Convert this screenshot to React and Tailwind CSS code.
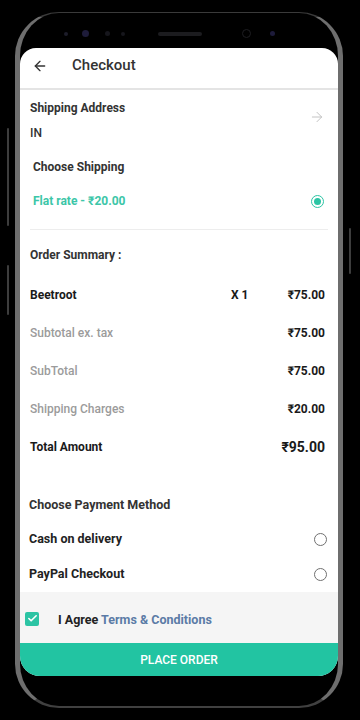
import React from "react";
import { ArrowLeft, ArrowRight, Check } from "lucide-react";

function Row({ label, qty, amount, grey, big }) {
  return (
    <div className="flex h-[38px] items-center">
      <span
        className={
          "flex-1 text-[12px] leading-[16px] " +
          (grey ? "font-medium text-[#9b9b9b]" : "font-bold text-[#1a1a1a]")
        }
      >
        {label}
      </span>
      <span className="w-[35px] text-[12px] font-bold text-[#1a1a1a]">{qty}</span>
      <span
        className={
          "w-[62px] pr-[3px] text-right font-bold text-[#1a1a1a] " +
          (big ? "text-[14px]" : "text-[12px]")
        }
      >
        {amount}
      </span>
    </div>
  );
}

function Radio({ checked }) {
  return checked ? (
    <span className="flex h-[13px] w-[13px] items-center justify-center rounded-full border-[1.5px] border-[#2cc4a4]">
      <span className="h-[7px] w-[7px] rounded-full bg-[#2cc4a4]" />
    </span>
  ) : (
    <span className="h-[13px] w-[13px] rounded-full border-[1.5px] border-[#707070]" />
  );
}

export default function App() {
  return (
    <div className="relative h-[720px] w-[360px] overflow-hidden bg-black font-[Roboto]">
      {/* side buttons */}
      <div className="absolute left-[7px] top-[128px] h-[98px] w-[2px] rounded bg-[#3d3d3d]" />
      <div className="absolute left-[7px] top-[265px] h-[50px] w-[2px] rounded bg-[#3d3d3d]" />
      <div className="absolute left-[349px] top-[228px] h-[46px] w-[2px] rounded bg-[#3d3d3d]" />

      {/* phone body */}
      <div className="ml-[15px] mt-[12px] flex h-[696px] w-[328px] flex-col rounded-[44px] border-x-[5px] border-b-[2px] border-t-[1px] border-x-[#6e6e6e] border-b-[#404040] border-t-[#3a3a3a] bg-black">
        {/* top bezel */}
        <div className="flex h-[35px] items-center pt-[6px]">
          <span className="ml-[44px] h-[4px] w-[4px] rounded-full bg-[#1d1d2a]" />
          <span className="ml-[14px] h-[7px] w-[7px] rounded-full bg-[#1e1c3a]" />
          <span className="ml-[16px] h-[5px] w-[5px] rounded-full bg-[#16161c]" />
          <span className="ml-[11px] h-[4px] w-[4px] rounded-full bg-[#16161c]" />
          <span className="ml-[33px] h-[4px] w-[44px] rounded-full bg-[#1c1c1f]" />
          <span className="ml-[40px] h-[9px] w-[9px] rounded-full border-[1.5px] border-[#1e1e22]" />
          <span className="ml-[19px] h-[5px] w-[5px] rounded-full bg-[#1d1b3a]" />
        </div>

        {/* screen */}
        <div className="flex h-[628px] w-[318px] flex-col overflow-hidden rounded-b-[20px] rounded-t-[16px] bg-white">
          {/* header */}
          <div className="flex h-[42px] shrink-0 items-center border-b-2 border-[#e4e4e4] pb-[5px] pl-[12px]">
            <ArrowLeft size={16} strokeWidth={2} className="text-[#333]" />
            <span className="ml-[24px] text-[15px] font-medium text-[#333]">Checkout</span>
          </div>

          <div className="flex flex-col px-[10px]">
            <div className="mt-[10px] flex items-start justify-between">
              <div className="flex flex-col">
                <span className="text-[12px] font-bold leading-[16px] text-[#333]">Shipping Address</span>
                <span className="mt-[9px] text-[12px] font-medium leading-[16px] text-[#333]">IN</span>
              </div>
              <ArrowRight size={16} strokeWidth={1.5} className="mr-[3px] mt-[9px] text-[#c4c4c4]" />
            </div>

            <span className="mt-[18px] pl-[3px] text-[12px] font-bold leading-[16px] text-[#333]">
              Choose Shipping
            </span>

            <div className="mt-[18px] flex h-[16px] items-center justify-between pl-[3px] pr-[4px]">
              <span className="text-[12px] font-bold text-[#3cc6a8]">Flat rate - ₹20.00</span>
              <Radio checked />
            </div>

            <div className="mt-[20px] h-px bg-[#ededed]" />

            <span className="mt-[17px] text-[12px] font-bold leading-[16px] text-[#333]">Order Summary :</span>

            <div className="mt-[13px] flex flex-col">
              <Row label="Beetroot" qty="X 1" amount="₹75.00" />
              <Row label="Subtotal ex. tax" amount="₹75.00" grey />
              <Row label="SubTotal" amount="₹75.00" grey />
              <Row label="Shipping Charges" amount="₹20.00" grey />
              <Row label="Total Amount" amount="₹95.00" big />
            </div>

            <span className="mt-[31px] -ml-px text-[12.5px] font-bold leading-[16px] text-[#333]">
              Choose Payment Method
            </span>

            <div className="mt-[18px] -ml-px flex h-[16px] items-center justify-between pr-[1px]">
              <span className="text-[12.5px] font-bold text-[#222]">Cash on delivery</span>
              <Radio />
            </div>
            <div className="mt-[19px] -ml-px flex h-[16px] items-center justify-between pr-[1px]">
              <span className="text-[12.5px] font-bold text-[#222]">PayPal Checkout</span>
              <Radio />
            </div>
          </div>

          <div className="mt-[10px] flex h-[51px] shrink-0 items-center bg-[#f5f5f5] pl-[5px] pt-[6px]">
            <span className="mb-[4px] flex h-[14px] w-[14px] items-center justify-center rounded-[2px] bg-[#2cc4a4]">
              <Check size={11} strokeWidth={3.5} className="text-white" />
            </span>
            <span className="ml-[19px] text-[12.5px] font-bold text-[#222]">
              I Agree <span className="text-[#5b7ba6]">Terms &amp; Conditions</span>
            </span>
          </div>

          <div className="flex h-[33px] shrink-0 items-center justify-center bg-[#22c4a2]">
            <span className="text-[12px] font-medium text-white">PLACE ORDER</span>
          </div>
        </div>
      </div>
    </div>
  );
}
